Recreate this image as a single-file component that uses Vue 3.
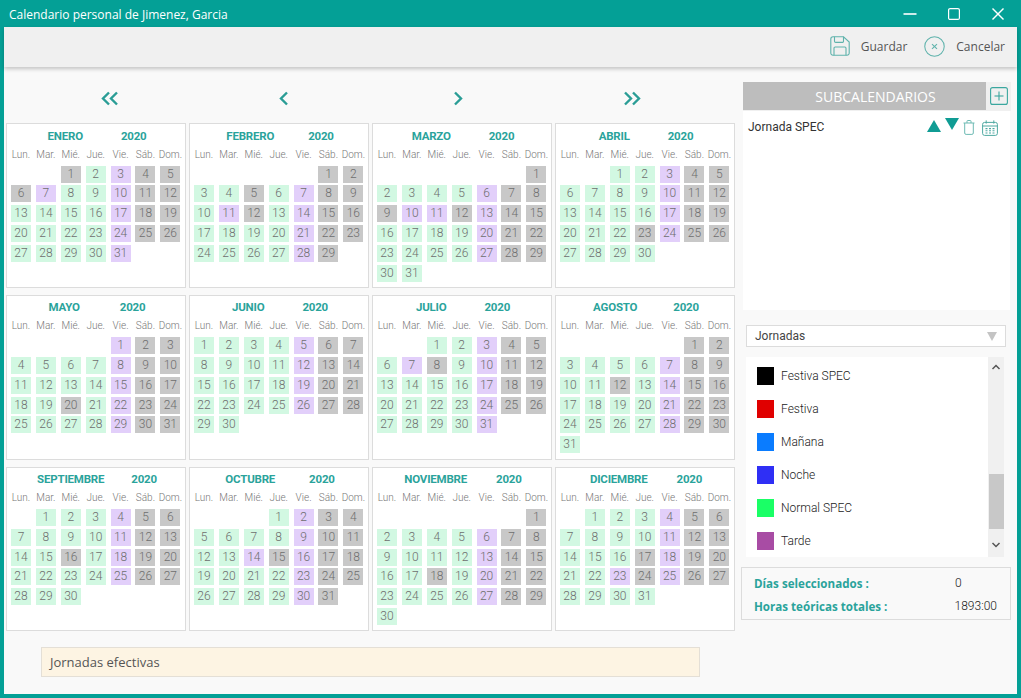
<template>
  <div class="window">
    <header class="title-bar">
      <span class="title-text">Calendario personal de Jimenez, Garcia</span>
      <div class="win-controls">
        <svg viewBox="0 0 14 14" width="14" height="14" fill="none" stroke="#fff" stroke-width="1.6">
          <line x1="0.5" y1="7" x2="13.5" y2="7"></line>
        </svg>
        <svg viewBox="0 0 14 14" width="14" height="14" fill="none" stroke="#fff" stroke-width="1.2">
          <rect x="1.6" y="1.6" width="10.8" height="10.8" rx="1.5"></rect>
        </svg>
        <svg viewBox="0 0 14 14" width="14" height="14" fill="none" stroke="#fff" stroke-width="1.4">
          <line x1="1.5" y1="1.5" x2="12.5" y2="12.5"></line>
          <line x1="12.5" y1="1.5" x2="1.5" y2="12.5"></line>
        </svg>
      </div>
    </header>

    <div class="content">
      <div class="toolbar">
        <button class="tool-btn save-btn">
          <svg viewBox="0 0 20 20" width="20" height="20" fill="none" stroke="#5fb3ac" stroke-width="1.1">
            <path d="M3 0.8h10.5l5.7 5.2v11a2.2 2.2 0 0 1-2.2 2.2H3A2.2 2.2 0 0 1 0.8 17V3A2.2 2.2 0 0 1 3 0.8z"></path>
            <path d="M4.5 0.8v4.4a1.2 1.2 0 0 0 1.2 1.2h6.6a1.2 1.2 0 0 0 1.2-1.2V0.8"></path>
            <path d="M4 19.2v-7a1.2 1.2 0 0 1 1.2-1.2h9.6a1.2 1.2 0 0 1 1.2 1.2v7"></path>
          </svg>
          <span>Guardar</span>
        </button>
        <button class="tool-btn">
          <svg viewBox="0 0 22 22" width="21" height="21" fill="none" stroke="#5fb3ac" stroke-width="1.1">
            <circle cx="11" cy="11" r="10.2"></circle>
            <line x1="8.4" y1="8.4" x2="13.6" y2="13.6"></line>
            <line x1="13.6" y1="8.4" x2="8.4" y2="13.6"></line>
          </svg>
          <span>Cancelar</span>
        </button>
      </div>

      <div class="main">
        <section class="left-col">
          <div class="nav-row">
            <svg viewBox="0 0 18 14" width="18" height="15" fill="none" stroke="#2a9d96" stroke-width="2.4">
              <polyline points="8,1 2,7 8,13"></polyline>
              <polyline points="16,1 10,7 16,13"></polyline>
            </svg>
            <svg viewBox="0 0 10 14" width="10" height="15" fill="none" stroke="#2a9d96" stroke-width="2.4">
              <polyline points="8,1 2,7 8,13"></polyline>
            </svg>
            <svg viewBox="0 0 10 14" width="10" height="15" fill="none" stroke="#2a9d96" stroke-width="2.4">
              <polyline points="2,1 8,7 2,13"></polyline>
            </svg>
            <svg viewBox="0 0 18 14" width="18" height="15" fill="none" stroke="#2a9d96" stroke-width="2.4">
              <polyline points="2,1 8,7 2,13"></polyline>
              <polyline points="10,1 16,7 10,13"></polyline>
            </svg>
          </div>

          <div class="months">
            <div class="month-card" v-for="m in months" :key="m.name">
              <div class="month-title" :style="{ gap: titleGap(m.name) + 'px' }">
                <span>{{ m.name }}</span>
                <span>2020</span>
              </div>
              <div class="week-row">
                <span v-for="w in weekDays" :key="w">{{ w }}</span>
              </div>
              <div class="day-grid">
                <span v-for="n in m.offset" :key="'e' + n"></span>
                <span v-for="d in m.days" :key="d" class="day" :class="dayClass(m, d)">{{ d }}</span>
              </div>
            </div>
          </div>

          <div class="note">Jornadas efectivas</div>
        </section>

        <aside class="right-col">
          <div class="sub-head">
            <div class="sub-title">SUBCALENDARIOS</div>
            <button class="add-btn">
              <svg viewBox="0 0 18 18" width="18" height="18" fill="none" stroke="#3ba79f" stroke-width="1.1">
                <rect x="0.6" y="0.6" width="16.8" height="16.8" rx="2"></rect>
                <line x1="9" y1="4.5" x2="9" y2="13.5"></line>
                <line x1="4.5" y1="9" x2="13.5" y2="9"></line>
              </svg>
            </button>
          </div>

          <div class="sub-panel">
            <div class="sub-item">
              <span>Jornada SPEC</span>
              <div class="sub-icons">
                <svg viewBox="0 0 14 12" width="14" height="12" fill="#109c94">
                  <polygon points="7,0 14,12 0,12"></polygon>
                </svg>
                <svg class="down-arrow" viewBox="0 0 14 12" width="14" height="12" fill="#109c94">
                  <polygon points="0,0 14,0 7,12"></polygon>
                </svg>
                <svg class="trash" viewBox="0 0 12 15" width="12" height="15" fill="none" stroke="#6dbab3" stroke-width="1">
                  <path d="M0.5 3h11M4 3V1.2a0.7 0.7 0 0 1 0.7-0.7h2.6a0.7 0.7 0 0 1 0.7 0.7V3"></path>
                  <path d="M1.7 3v10a1.4 1.4 0 0 0 1.4 1.4h5.8a1.4 1.4 0 0 0 1.4-1.4V3"></path>
                </svg>
                <svg class="cal" viewBox="0 0 16 16" width="16" height="16" fill="none" stroke="#4fa9a2" stroke-width="1">
                  <rect x="0.6" y="2.4" width="14.8" height="13" rx="2"></rect>
                  <line x1="0.6" y1="6" x2="15.4" y2="6"></line>
                  <line x1="4.2" y1="0.4" x2="4.2" y2="3.6"></line>
                  <line x1="11.8" y1="0.4" x2="11.8" y2="3.6"></line>
                  <path d="M3.5 8.6h2M7 8.6h2M10.5 8.6h2M3.5 10.8h2M7 10.8h2M10.5 10.8h2M3.5 13h2M7 13h2M10.5 13h2" stroke-width="1.1"></path>
                </svg>
              </div>
            </div>
          </div>

          <div class="select-box">
            <span>Jornadas</span>
            <svg viewBox="0 0 10 9" width="10" height="9" fill="#c4c4c4">
              <polygon points="0,0 10,0 5,9"></polygon>
            </svg>
          </div>

          <div class="legend">
            <ul class="legend-list">
              <li v-for="j in jornadas" :key="j.name">
                <i class="swatch" :style="{ background: j.color }"></i>
                <span>{{ j.name }}</span>
              </li>
            </ul>
            <div class="scrollbar">
              <svg viewBox="0 0 10 6" width="10" height="6" fill="none" stroke="#555" stroke-width="1.5">
                <polyline points="1.5,5 5,1.5 8.5,5"></polyline>
              </svg>
              <div class="thumb"></div>
              <svg class="scroll-down" viewBox="0 0 10 6" width="10" height="6" fill="none" stroke="#555" stroke-width="1.5">
                <polyline points="1.5,1 5,4.5 8.5,1"></polyline>
              </svg>
            </div>
          </div>

          <div class="stats">
            <div class="stat-row">
              <span class="stat-label">Días seleccionados :</span>
              <span class="stat-value">0</span>
            </div>
            <div class="stat-row">
              <span class="stat-label">Horas teóricas totales :</span>
              <span class="stat-value">1893:00</span>
            </div>
          </div>
        </aside>
      </div>
    </div>
  </div>
</template>

<script setup>
const weekDays = ['Lun.', 'Mar.', 'Mié.', 'Jue.', 'Vie.', 'Sáb.', 'Dom.']

const months = [
  { name: 'ENERO', offset: 2, days: 31, gray: [1, 6], purple: [7] },
  { name: 'FEBRERO', offset: 5, days: 29, gray: [5, 12], purple: [11] },
  { name: 'MARZO', offset: 6, days: 31, gray: [9, 12], purple: [10, 11] },
  { name: 'ABRIL', offset: 2, days: 30, gray: [23], purple: [] },
  { name: 'MAYO', offset: 4, days: 31, gray: [20], purple: [] },
  { name: 'JUNIO', offset: 0, days: 30, gray: [], purple: [] },
  { name: 'JULIO', offset: 2, days: 31, gray: [8], purple: [7] },
  { name: 'AGOSTO', offset: 5, days: 31, gray: [12], purple: [] },
  { name: 'SEPTIEMBRE', offset: 1, days: 30, gray: [16], purple: [] },
  { name: 'OCTUBRE', offset: 3, days: 31, gray: [15], purple: [14] },
  { name: 'NOVIEMBRE', offset: 6, days: 30, gray: [18], purple: [] },
  { name: 'DICIEMBRE', offset: 1, days: 31, gray: [17, 24], purple: [23] }
]

const jornadas = [
  { name: 'Festiva SPEC', color: '#000000' },
  { name: 'Festiva', color: '#e00000' },
  { name: 'Mañana', color: '#0a7cff' },
  { name: 'Noche', color: '#2f2ff5' },
  { name: 'Normal SPEC', color: '#1aff66' },
  { name: 'Tarde', color: '#a84ca4' }
]

const titleGap = (name) => Math.round(49 - 2.2 * name.length)

const dayClass = (m, d) => {
  if (m.gray.includes(d)) return 'gray'
  if (m.purple.includes(d)) return 'purple'
  const col = (m.offset + d - 1) % 7
  if (col === 4) return 'purple'
  if (col > 4) return 'gray'
  return 'green'
}
</script>

<style>
html,
body {
  margin: 0;
  padding: 0;
}
</style>

<style scoped>
.window {
  width: 1021px;
  height: 698px;
  display: flex;
  flex-direction: column;
  background: #04a096;
  padding: 0 4px 4px;
  box-sizing: border-box;
  overflow: hidden;
  font-family: Roboto, "Liberation Sans", sans-serif;
}

.title-bar {
  height: 27px;
  flex-shrink: 0;
  display: flex;
  align-items: center;
  justify-content: space-between;
  padding: 3px 12px 0 5px;
  box-sizing: border-box;
  margin-top: -1px;
}

.title-text {
  font-family: "Open Sans", sans-serif;
  font-size: 12px;
  color: #fff;
}

.win-controls {
  display: flex;
  align-items: center;
  gap: 30px;
}

.content {
  flex: 1;
  min-height: 0;
  display: flex;
  flex-direction: column;
  background: #f9f9f9;
  margin-top: 1px;
}

.toolbar {
  height: 40px;
  flex-shrink: 0;
  display: flex;
  align-items: center;
  justify-content: flex-end;
  gap: 17px;
  padding: 0 12px 2px 0;
  box-sizing: border-box;
  background: #f0f0f0;
  box-shadow: 0 2px 4px rgba(0, 0, 0, 0.22);
  position: relative;
}

.tool-btn {
  display: flex;
  align-items: center;
  gap: 11px;
  border: none;
  background: transparent;
  padding: 0;
  font-family: "Open Sans", sans-serif;
  font-size: 12px;
  color: #555;
}

.main {
  flex: 1;
  min-height: 0;
  display: flex;
  padding-top: 15px;
}

.left-col {
  width: 731px;
  padding-left: 2px;
  flex-shrink: 0;
  box-sizing: border-box;
}

.nav-row {
  height: 32.4px;
  margin-bottom: 9px;
  display: grid;
  grid-template-columns: repeat(4, 174px);
  justify-items: center;
  align-items: center;
  padding-left: 17px;
}

.months {
  display: grid;
  grid-template-columns: repeat(4, 180px);
  grid-auto-rows: 164.7px;
  gap: 7px 3px;
}

.month-card {
  border: 1px solid #dcdcdc;
  background: #fff;
  box-sizing: border-box;
  padding: 4px 0 0 4px;
}

.month-title {
  height: 16px;
  margin: -0.8px 0 0.8px;
  display: flex;
  justify-content: center;
  align-items: center;
  padding-right: 2px;
  font-size: 11.5px;
  font-weight: 700;
  color: #2aa39b;
  letter-spacing: -0.2px;
}

.week-row,
.day-grid {
  display: grid;
  grid-template-columns: repeat(7, 20px);
  column-gap: 4.9px;
}

.week-row {
  height: 14px;
  margin-top: 4px;
  line-height: 14px;
  font-size: 10px;
  font-weight: 300;
  color: #777;
  text-align: center;
  white-space: nowrap;
}

.week-row span {
  display: flex;
  justify-content: center;
}

.day-grid {
  margin-top: 4px;
  grid-auto-rows: 17px;
  row-gap: 2.8px;
}

.day {
  line-height: 17px;
  text-align: center;
  font-size: 12px;
  font-weight: 300;
  color: #6e6e6e;
}

.green {
  background: #d2f8e2;
}

.purple {
  background: #e2cffa;
}

.gray {
  background: #c8c8c8;
}

.note {
  width: 659px;
  height: 30px;
  margin: 15.5px 0 0 35px;
  padding-left: 8px;
  box-sizing: border-box;
  border: 1px solid #e4dfd6;
  background: #fdf4e3;
  font-family: "Open Sans", sans-serif;
  font-size: 13px;
  line-height: 28px;
  color: #555;
}

.right-col {
  width: 270px;
  margin-left: 6px;
  flex-shrink: 0;
  display: flex;
  flex-direction: column;
}

.sub-head {
  margin-left: 2px;
  display: flex;
  height: 29px;
  background: #f0f0f0;
  width: 268px;
}

.sub-title {
  width: 243px;
  height: 28px;
  padding-left: 22px;
  box-sizing: border-box;
  background: #bdbdbd;
  color: #fff;
  text-align: center;
  font-family: "Open Sans", sans-serif;
  font-size: 14px;
  line-height: 30px;
}

.add-btn {
  border: none;
  background: transparent;
  padding: 0;
  margin: 5px 0 0 4px;
  height: 18px;
  display: flex;
}

.sub-panel {
  margin-left: 2px;
  width: 267px;
  height: 199px;
  background: #fff;
}

.sub-item {
  display: flex;
  justify-content: space-between;
  padding: 9px 12px 0 5px;
  font-size: 12px;
  color: #333;
}

.sub-icons {
  display: flex;
  align-items: flex-start;
}

.down-arrow {
  margin-left: 4px;
  margin-top: -2px;
}

.trash {
  margin-left: 4px;
}

.cal {
  margin-left: 7px;
}

.select-box {
  margin: 15px 0 0 5px;
  width: 260px;
  height: 22px;
  box-sizing: border-box;
  border: 1px solid #dcdcdc;
  background: #fff;
  display: flex;
  align-items: center;
  justify-content: space-between;
  padding: 0 8px;
  font-size: 12px;
  color: #444;
}

.legend {
  margin: 10px 0 0 5px;
  width: 258px;
  height: 200px;
  background: #fff;
  display: flex;
  justify-content: space-between;
}

.legend-list {
  list-style: none;
  margin: 0;
  padding: 0 0 0 11px;
}

.legend-list li {
  height: 33px;
  display: flex;
  align-items: center;
  gap: 7px;
  margin-top: 0;
  font-size: 12px;
  font-weight: 300;
  color: #222;
  position: relative;
  top: 2px;
}

.swatch {
  width: 17px;
  height: 18px;
  display: block;
}

.scrollbar {
  width: 16px;
  background: #f0f0f0;
  display: flex;
  flex-direction: column;
  align-items: center;
  padding-top: 7px;
  box-sizing: border-box;
}

.thumb {
  width: 15px;
  height: 55px;
  margin-top: 104px;
  background: #c8c8c8;
}

.scroll-down {
  margin-top: 13px;
}

.stats {
  margin-top: 10px;
  width: 270px;
  height: 53px;
  box-sizing: border-box;
  border: 1px solid #dcdcdc;
  padding: 5px 13px 0 12px;
  display: flex;
  flex-direction: column;
  gap: 3px;
}

.stat-row {
  height: 20px;
  display: flex;
  align-items: center;
}

.stat-label {
  width: 201px;
  font-family: "Open Sans", sans-serif;
  font-size: 11.6px;
  font-weight: 700;
  color: #2aa39b;
}

.stat-value {
  font-size: 12px;
  font-weight: 300;
  color: #222;
}
</style>
